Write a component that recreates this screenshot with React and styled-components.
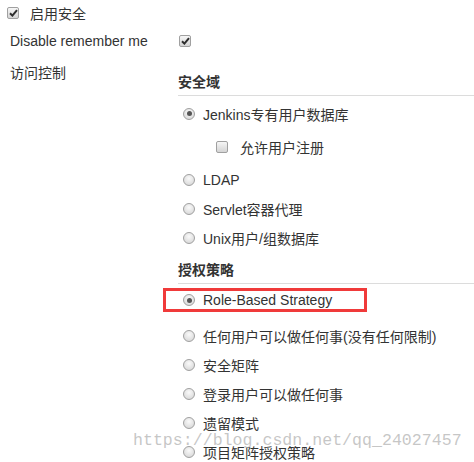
import React from 'react';
import styled, { createGlobalStyle } from 'styled-components';

const GlobalStyle = createGlobalStyle`
  html, body {
    margin: 0;
    padding: 0;
    background: #fff;
  }
  body {
    font-family: "Liberation Sans", Arial, "Noto Sans CJK SC", sans-serif;
    font-size: 14px;
    color: #333;
  }
`;

const Page = styled.div`
  position: relative;
  width: 474px;
  height: 462px;
  overflow: hidden;
`;

const TopRow = styled.div`
  display: flex;
  align-items: center;
  height: 26px;
  padding-left: 7px;
  gap: 11px;
`;

const FieldRow = styled.div`
  display: grid;
  grid-template-columns: 178px 1fr;
  align-items: ${(p) => (p.$top ? 'start' : 'center')};
  min-height: ${(p) => (p.$top ? 'auto' : '30px')};
`;

const Label = styled.div`
  padding-left: 10px;
  line-height: 20px;
  padding-top: ${(p) => p.$padTop || 0}px;
`;

const CheckCell = styled.div`
  display: flex;
  align-items: center;
  padding-left: 1px;
`;

const Box = styled.span`
  display: inline-flex;
  align-items: center;
  justify-content: center;
  flex: none;
  width: 12px;
  height: 12px;
  box-sizing: border-box;
  border: 1px solid #a0a0a0;
  border-radius: 2px;
  background: linear-gradient(#f6f6f6, #d4d4d4);
  svg {
    display: block;
  }
`;

const Radio = styled.span`
  position: relative;
  flex: none;
  width: 12px;
  height: 12px;
  box-sizing: border-box;
  border-radius: 50%;
  border: 1px solid #a0a0a0;
  background: radial-gradient(circle at 50% 35%, #fafafa, #d2d2d2);
  &::after {
    content: '';
    display: ${(p) => (p.$checked ? 'block' : 'none')};
    position: absolute;
    left: 2.5px;
    top: 2.5px;
    width: 5px;
    height: 5px;
    border-radius: 50%;
    background: #555;
  }
`;

const Right = styled.div`
  display: flex;
  flex-direction: column;
`;

const Heading = styled.div`
  font-weight: bold;
  line-height: 20px;
  margin-top: ${(p) => p.$mt}px;
  padding-bottom: 3px;
  border-bottom: 1px solid #dcdcdc;
  margin-bottom: ${(p) => p.$mb || 0}px;
`;

const Option = styled.div`
  display: flex;
  align-items: center;
  height: 29px;
  padding-left: ${(p) => p.$indent ?? 5}px;
  gap: ${(p) => p.$gap ?? 8}px;
`;

const Nested = styled.div`
  padding: 4px 0;
`;

const Highlight = styled.div`
  display: flex;
  align-items: center;
  gap: 8px;
  box-sizing: border-box;
  width: 204px;
  height: 24px;
  margin: 4px 0 9px -15px;
  padding-left: 17px;
  border: 3px solid #f03a3a;
`;

const Watermark = styled.div`
  position: absolute;
  left: 133px;
  top: 430px;
  font-family: "Liberation Mono", "Courier New", monospace;
  font-size: 16.6px;
  line-height: 22px;
  color: rgba(180, 180, 180, 0.75);
  white-space: nowrap;
  pointer-events: none;
`;

const Check = ({ checked }) => (
  <Box>
    {checked && (
      <svg width="9" height="8" viewBox="0 0 9 8">
        <path d="M1 4.2 L3.4 6.6 L8 1.2" fill="none" stroke="#2e2e2e" strokeWidth="2" />
      </svg>
    )}
  </Box>
);

const realms = ['LDAP', 'Servlet容器代理', 'Unix用户/组数据库'];
const strategies = ['任何用户可以做任何事(没有任何限制)', '安全矩阵', '登录用户可以做任何事', '遗留模式', '项目矩阵授权策略'];

export default function App() {
  return (
    <Page>
      <GlobalStyle />
      <TopRow>
        <Check checked />
        <span>启用安全</span>
      </TopRow>
      <FieldRow>
        <Label>Disable remember me</Label>
        <CheckCell>
          <Check checked />
        </CheckCell>
      </FieldRow>
      <FieldRow $top>
        <Label $padTop={7}>访问控制</Label>
        <Right>
          <Heading $mt={16} $mb={3}>安全域</Heading>
          <Option>
            <Radio $checked />
            <span>Jenkins专有用户数据库</span>
          </Option>
          <Nested>
            <Option $indent={38} $gap={12}>
              <Check />
              <span>允许用户注册</span>
            </Option>
          </Nested>
          {realms.map((r) => (
            <Option key={r}>
              <Radio />
              <span>{r}</span>
            </Option>
          ))}
          <Heading $mt={8}>授权策略</Heading>
          <Highlight>
            <Radio $checked />
            <span>Role-Based Strategy</span>
          </Highlight>
          {strategies.map((s) => (
            <Option key={s}>
              <Radio />
              <span>{s}</span>
            </Option>
          ))}
        </Right>
      </FieldRow>
      <Watermark>https://blog.csdn.net/qq_24027457</Watermark>
    </Page>
  );
}
